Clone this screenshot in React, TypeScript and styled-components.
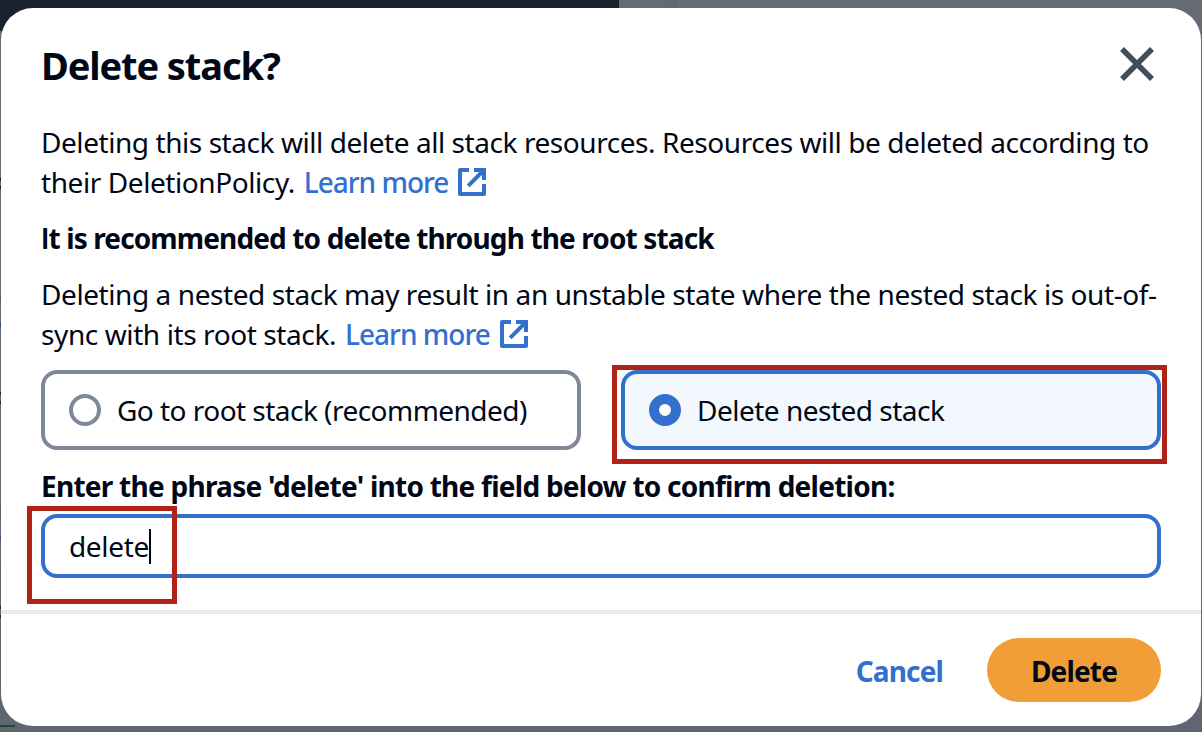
import React from "react";
import styled, { createGlobalStyle } from "styled-components";

const GlobalStyle = createGlobalStyle`
  *, *::before, *::after { box-sizing: border-box; }
  body {
    margin: 0;
    overflow: hidden;
    color: #000716;
    font-family: "Noto Sans", "Open Sans", sans-serif;
    font-size: 28px;
    line-height: 40px;
    font-weight: 400;
  }
`;

const colors = {
  blue: "#3370ce",
  gray: "#7f8898",
  mark: "#b02216",
  orange: "#f29e38",
};

/* Dimmed console page that shows around the dialog. */
const Backdrop = styled.div`
  height: 732px;
  padding: 8px 1px 6px;
  background:
    linear-gradient(#28452f, #28452f) 0 725px / 15px 2px no-repeat,
    linear-gradient(
      #0000 178px, #1f2633 178px 181px, #0000 181px 186px, #1f2633 186px 189px,
      #0000 189px 297px, #3d5a4c 297px 299px, #0000 299px 323px, #2b4a80 323px 327px,
      #0000 327px 392px, #1f2633 392px 395px, #0000 395px 401px, #1f2633 401px 404px,
      #0000 404px 511px, #3d5a4c 511px 513px, #0000 513px 536px, #3c5283 536px 539px,
      #0000 539px 606px, #1f2633 606px 609px, #0000 609px 615px, #1f2633 615px 618px, #0000 618px
    ) 0 0 / 1px 100% no-repeat,
    linear-gradient(#1c2130, #1c2130) 0 0 / 619px 31px no-repeat,
    linear-gradient(90deg, #656c76 660px, #5f6672 677px, #656c76 678px) 0 0 / 100% 8px no-repeat,
    linear-gradient(#656b75, #5f6571);
`;

const Dialog = styled.section`
  display: flex;
  flex-direction: column;
  height: 718px;
  border-radius: 32px;
  background: #fff;
`;

const Header = styled.header`
  display: flex;
  justify-content: space-between;
  align-items: flex-start;
  height: 114px;
  padding: 32px 40px 0;
`;

const Title = styled.h1`
  margin: 0;
  font-size: 38px;
  line-height: 50px;
  font-weight: 700;
  letter-spacing: -1.1px;
`;

const CloseButton = styled.button`
  display: flex;
  margin: 7px 7px 0 0;
  padding: 0;
  border: 0;
  background: none;
  color: #424d5c;
`;

const Body = styled.div`
  display: flex;
  flex-direction: column;
  height: 488px;
  padding: 0 40px;
`;

const Paragraph = styled.p`
  margin: 0 0 16px;
  white-space: nowrap;
`;

const Strong = styled.p`
  margin: 0 0 16px;
  font-weight: 660;
  white-space: nowrap;
`;

const Run = styled.span<{ $track: number }>`
  letter-spacing: ${(p) => p.$track}px;
`;

const PlainCapital = styled.span`
  font-family: Lato, sans-serif;
  font-weight: 700;
`;

const Link = styled.a`
  margin-left: 9px;
  color: ${colors.blue};
  font-weight: 520;
  svg { margin-left: 10px; vertical-align: -3px; }
`;

const Tiles = styled.div`
  display: grid;
  grid-template-columns: 1fr 1fr;
  gap: 40px;
`;

const Tile = styled.label<{ $selected?: boolean }>`
  position: relative;
  display: flex;
  align-items: center;
  gap: 16px;
  height: 80px;
  padding: 0 24px;
  border: 4px solid ${(p) => (p.$selected ? colors.blue : colors.gray)};
  border-radius: 16px;
  background: ${(p) => (p.$selected ? "#f2f8fd" : "#fff")};
  white-space: nowrap;
`;

const Radio = styled.span<{ $selected?: boolean }>`
  width: 32px;
  height: 32px;
  border: ${(p) => (p.$selected ? `10px solid ${colors.blue}` : `4px solid ${colors.gray}`)};
  border-radius: 50%;
  background: #fff;
`;

const FieldLabel = styled.label`
  margin: 16px 0 8px;
  font-weight: 660;
  white-space: nowrap;
`;

const Field = styled.div`
  position: relative;
  display: flex;
  align-items: center;
  height: 64px;
  padding: 0 24px;
  border: 4px solid ${colors.blue};
  border-radius: 16px;
`;

const Caret = styled.span`
  width: 2px;
  height: 35px;
  background: #000716;
`;

const TileMark = styled.span`
  position: absolute;
  inset: -9px -10px -18px -13px;
  border: 5px solid ${colors.mark};
`;

const FieldMark = styled.span`
  position: absolute;
  left: -18px;
  top: -12px;
  width: 150px;
  height: 98px;
  border: 5px solid ${colors.mark};
`;

const Footer = styled.footer`
  display: flex;
  justify-content: flex-end;
  align-items: flex-start;
  flex: 1;
  gap: 44px;
  padding: 24px 40px 0;
  border-top: 4px solid #ebebeb;
`;

const Button = styled.button<{ $primary?: boolean }>`
  width: ${(p) => (p.$primary ? "174px" : "auto")};
  height: 64px;
  padding: 2px 0 0;
  border: 0;
  border-radius: 32px;
  background: ${(p) => (p.$primary ? colors.orange : "none")};
  color: ${(p) => (p.$primary ? "#000716" : colors.blue)};
  font: 660 28px/40px "Noto Sans", sans-serif;
  letter-spacing: -0.85px;
`;

const CloseIcon = () => (
  <svg width="34" height="34" viewBox="0 0 34 34" fill="none" stroke="currentColor" strokeWidth="5.5">
    <path d="M2 2l30 30M32 2L2 32" />
  </svg>
);

const ExternalIcon = () => (
  <svg width="28" height="28" viewBox="0 0 28 28" fill="none" stroke="currentColor" strokeWidth="4">
    <path d="M11 2H2v24h24V16" strokeLinejoin="round" />
    <path d="M16 2h10v10M26 2L10.2 17.8" />
  </svg>
);

const LearnMore = () => (
  <Link>
    <Run $track={-1}>Learn more</Run>
    <ExternalIcon />
  </Link>
);

export default function App() {
  return (
    <>
      <GlobalStyle />
      <Backdrop>
        <Dialog role="dialog">
          <Header>
            <Title>Delete stack?</Title>
            <CloseButton aria-label="Close">
              <CloseIcon />
            </CloseButton>
          </Header>
          <Body>
            <Paragraph>
              <Run $track={-0.434}>
                Deleting this stack will delete all stack resources. Resources will be deleted according to
              </Run>
              <br />
              <Run $track={-0.42}>their DeletionPolicy.</Run>
              <LearnMore />
            </Paragraph>
            <Strong>
              <Run $track={-0.87}>
                <PlainCapital>I</PlainCapital>t is recommended to delete through the root stack
              </Run>
            </Strong>
            <Paragraph>
              <Run $track={-0.42}>
                Deleting a nested stack may result in an unstable state where the nested stack is out-of-
              </Run>
              <br />
              <Run $track={-0.4}>sync with its root stack.</Run>
              <LearnMore />
            </Paragraph>
            <Tiles>
              <Tile>
                <Radio />
                <Run $track={-0.53}>Go to root stack (recommended)</Run>
              </Tile>
              <Tile $selected>
                <Radio $selected />
                <Run $track={-0.5}>Delete nested stack</Run>
                <TileMark />
              </Tile>
            </Tiles>
            <FieldLabel>
              <Run $track={-0.74}>Enter the phrase 'delete' into the field below to confirm deletion:</Run>
            </FieldLabel>
            <Field>
              <Run $track={-0.35}>delete</Run>
              <Caret />
              <FieldMark />
            </Field>
          </Body>
          <Footer>
            <Button>Cancel</Button>
            <Button $primary>Delete</Button>
          </Footer>
        </Dialog>
      </Backdrop>
    </>
  );
}
